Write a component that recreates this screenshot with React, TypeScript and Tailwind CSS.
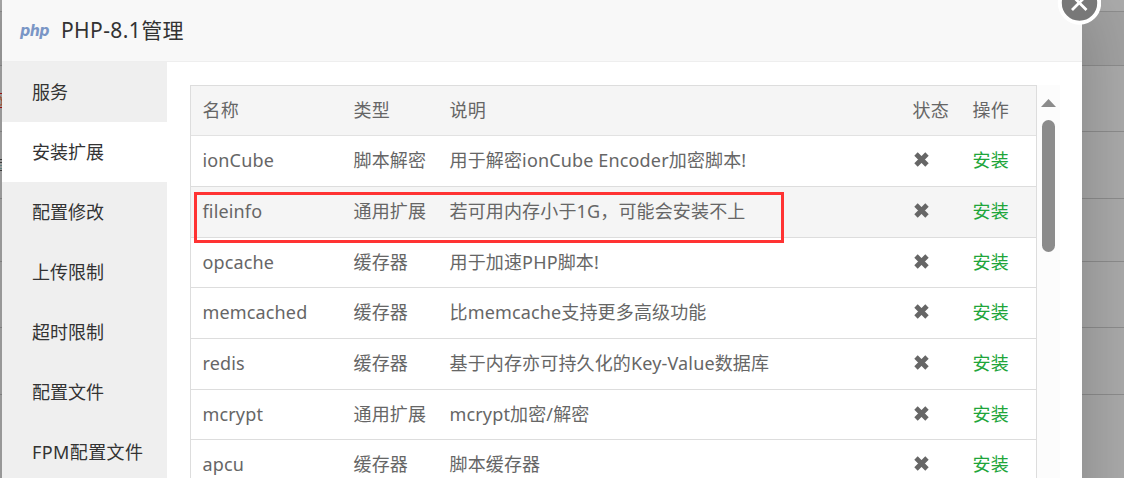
import clsx from 'clsx';

const menu = ['服务', '安装扩展', '配置修改', '上传限制', '超时限制', '配置文件', 'FPM配置文件'];

const extensions = [
  { name: 'ionCube', type: '脚本解密', desc: '用于解密ionCube Encoder加密脚本!', height: 'h-[51px]' },
  { name: 'fileinfo', type: '通用扩展', desc: '若可用内存小于1G，可能会安装不上', height: 'h-[51px]' },
  { name: 'opcache', type: '缓存器', desc: '用于加速PHP脚本!', height: 'h-[50px]' },
  { name: 'memcached', type: '缓存器', desc: '比memcache支持更多高级功能', height: 'h-[51px]' },
  { name: 'redis', type: '缓存器', desc: '基于内存亦可持久化的Key-Value数据库', height: 'h-[51px]' },
  { name: 'mcrypt', type: '通用扩展', desc: 'mcrypt加密/解密', height: 'h-[50px]' },
  { name: 'apcu', type: '缓存器', desc: '脚本缓存器', height: 'h-[51px]' },
];

const backdropRows = ['h-3', 'h-[54px] bg-[#a4a4a4]', 'h-[66px]', 'h-[67px]', 'h-[63px]', 'h-[66px]', 'h-[67px]'];

const columns = 'grid grid-cols-[151px_96px_463px_60px_1fr] items-center pb-0.5 pl-[11.5px]';

function RemoveIcon() {
  return (
    <svg className="mb-px ml-[0.5px] size-[17px] text-[#666]" viewBox="0 0 17 17" fill="none" stroke="currentColor">
      <path d="M3 3l11 11M14 3L3 14" strokeWidth="4.8" strokeLinejoin="round" />
    </svg>
  );
}

/* Dimmed page behind the dialog */
function Backdrop() {
  return (
    <div className="h-full bg-[#adadad]">
      {backdropRows.map((row, i) => (
        <div key={i} className={clsx('border-b border-[#8f8f8f]', row)} />
      ))}
      {/* Clipped edges of the page's own badges */}
      <svg className="absolute top-[92px] left-0 h-[82px] w-[2px]" viewBox="0 0 2 82" fill="none">
        <path d="M0 1.5h2M0 15.5h2" stroke="#b01010" />
        <path d="M0 5h1v3h1v5H0" stroke="#b04a20" />
        <path d="M0 67.5h2M0 70.5h2M0 78.5h2" stroke="#444" />
        <path d="M0 73.5h2M0 76.5h2" stroke="#6a9292" />
      </svg>
    </div>
  );
}

function Sidebar() {
  return (
    <nav className="w-[165px] shrink-0 bg-[#efefef] text-[#333]">
      {menu.map((item) => (
        <div
          key={item}
          className={clsx(
            'flex h-[60px] items-center pl-[30px]',
            item === '安装扩展' && 'bg-white',
            item === 'FPM配置文件' && 'tracking-[0.4px]'
          )}
        >
          {item}
        </div>
      ))}
    </nav>
  );
}

function ExtensionTable() {
  return (
    <div className="w-[847px] shrink-0 border border-b-0 border-[#ddd] tracking-[0.15px]">
      <div className={clsx(columns, 'h-[50px] border-b border-[#e2e2e2] bg-[#f5f5f5]')}>
        <span>名称</span>
        <span>类型</span>
        <span>说明</span>
        <span>状态</span>
        <span>操作</span>
      </div>
      {extensions.map(({ name, type, desc, height }) => (
        <div key={name} className={clsx(columns, 'border-b border-[#ddd]', height, name === 'fileinfo' && 'bg-[#f5f5f5]')}>
          <span>{name}</span>
          <span>{type}</span>
          <span>{desc}</span>
          <RemoveIcon />
          <span className="text-[#20a53a]">安装</span>
        </div>
      ))}
    </div>
  );
}

function Scrollbar() {
  return (
    <div className="flex w-[23px] shrink-0 flex-col items-center bg-[#fcfcfc] pt-3.5">
      <svg className="h-2 w-[15px] text-[#8b8b8b]" viewBox="0 0 15 8" fill="currentColor">
        <path d="M7.5 0L15 8H0z" />
      </svg>
      <div className="mt-[13px] h-[132px] w-[13px] rounded-full bg-[#8b8b8b]" />
    </div>
  );
}

export default function App() {
  return (
    <div className="relative h-[478px] w-[1124px] overflow-hidden font-['Noto_Sans','Noto_Sans_CJK_SC',sans-serif] text-lg leading-6 text-[#666]">
      <Backdrop />

      {/* Dialog */}
      <div className="absolute top-0 left-[2px] flex h-[640px] w-[1080px] flex-col bg-white shadow-[1px_1px_75px_rgba(0,0,0,0.25)]">
        <header className="flex h-[62px] shrink-0 items-center border-b border-[#eee] bg-[#f8f8f8] pl-[18px] text-[#333]">
          <span className="w-[41px] font-['DejaVu_Sans'] text-[15px] font-bold tracking-[-0.6px] text-[#7a96c6] italic">
            <span className="inline-block origin-left scale-x-95">php</span>
          </span>
          <h1 className="pb-0.5 text-[21px] tracking-[0.4px]">PHP-8.1管理</h1>
        </header>
        <div className="flex min-h-0 flex-1">
          <Sidebar />
          <div className="flex min-h-0 pt-[23px] pl-[23px]">
            <ExtensionTable />
            <Scrollbar />
          </div>
        </div>
      </div>

      {/* Close button */}
      <svg className="absolute -top-[19px] left-[1057px] size-11" viewBox="0 0 44 44" fill="none">
        <circle cx="22.5" cy="22" r="19.7" fill="#787878" stroke="#fff" strokeWidth="4" />
        <path d="M15 14.5l14.5 14.5M29.5 14.5L15 29" stroke="#fff" strokeWidth="2.8" />
      </svg>

      {/* Highlight box */}
      <div className="absolute top-[192px] left-[194px] h-[51px] w-[590px] border-3 border-[#ff3333]" />
    </div>
  );
}
